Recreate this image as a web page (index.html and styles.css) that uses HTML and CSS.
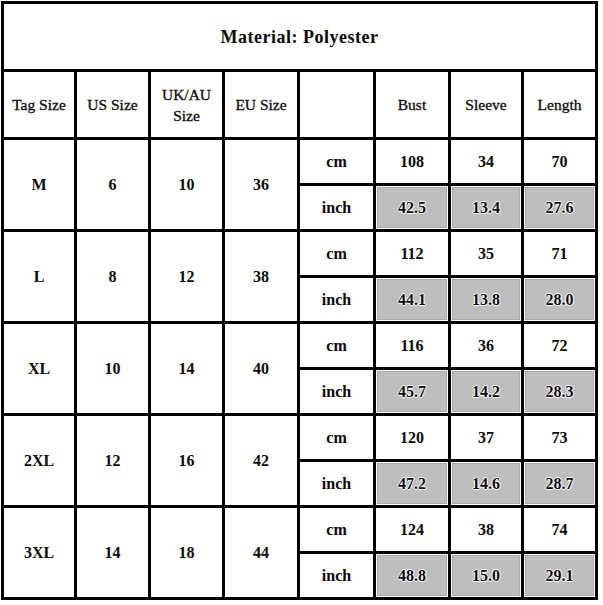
FILE: index.html
```html
<!DOCTYPE html>
<html lang="en">
<head>
<meta charset="utf-8">
<title>Size chart</title>
<link rel="stylesheet" href="styles.css">
</head>
<body>
<div class="page">
  <div class="sheet">
    <div class="cell title">Material: Polyester</div>

    <div class="cell head">Tag Size</div>
    <div class="cell head">US Size</div>
    <div class="cell head">UK/AU<br>Size</div>
    <div class="cell head">EU Size</div>
    <div class="cell head"></div>
    <div class="cell head">Bust</div>
    <div class="cell head">Sleeve</div>
    <div class="cell head">Length</div>

    <div class="cell span b">M</div>
    <div class="cell span b">6</div>
    <div class="cell span b">10</div>
    <div class="cell span b">36</div>
    <div class="cell b">cm</div>
    <div class="cell b">108</div>
    <div class="cell b">34</div>
    <div class="cell b">70</div>
    <div class="cell b">inch</div>
    <div class="cell g"><span class="fill">42.5</span></div>
    <div class="cell g"><span class="fill">13.4</span></div>
    <div class="cell g"><span class="fill">27.6</span></div>

    <div class="cell span b">L</div>
    <div class="cell span b">8</div>
    <div class="cell span b">12</div>
    <div class="cell span b">38</div>
    <div class="cell b">cm</div>
    <div class="cell b">112</div>
    <div class="cell b">35</div>
    <div class="cell b">71</div>
    <div class="cell b">inch</div>
    <div class="cell g"><span class="fill">44.1</span></div>
    <div class="cell g"><span class="fill">13.8</span></div>
    <div class="cell g"><span class="fill">28.0</span></div>

    <div class="cell span b">XL</div>
    <div class="cell span b">10</div>
    <div class="cell span b">14</div>
    <div class="cell span b">40</div>
    <div class="cell b">cm</div>
    <div class="cell b">116</div>
    <div class="cell b">36</div>
    <div class="cell b">72</div>
    <div class="cell b">inch</div>
    <div class="cell g"><span class="fill">45.7</span></div>
    <div class="cell g"><span class="fill">14.2</span></div>
    <div class="cell g"><span class="fill">28.3</span></div>

    <div class="cell span b">2XL</div>
    <div class="cell span b">12</div>
    <div class="cell span b">16</div>
    <div class="cell span b">42</div>
    <div class="cell b">cm</div>
    <div class="cell b">120</div>
    <div class="cell b">37</div>
    <div class="cell b">73</div>
    <div class="cell b">inch</div>
    <div class="cell g"><span class="fill">47.2</span></div>
    <div class="cell g"><span class="fill">14.6</span></div>
    <div class="cell g"><span class="fill">28.7</span></div>

    <div class="cell span b">3XL</div>
    <div class="cell span b">14</div>
    <div class="cell span b">18</div>
    <div class="cell span b">44</div>
    <div class="cell b">cm</div>
    <div class="cell b">124</div>
    <div class="cell b">38</div>
    <div class="cell b">74</div>
    <div class="cell b">inch</div>
    <div class="cell g"><span class="fill">48.8</span></div>
    <div class="cell g"><span class="fill">15.0</span></div>
    <div class="cell g"><span class="fill">29.1</span></div>
  </div>
</div>
</body>
</html>
```
FILE: styles.css
```css
html, body {
  margin: 0;
  padding: 0;
  background: #fff;
}

.page {
  padding: 1px 0 0 1px;
}

.sheet {
  display: grid;
  grid-template-columns: 70px 71px 71px 72px 73px 72px 70px 71px;
  grid-template-rows: 65px 65px repeat(10, 43px);
  gap: 3px;
  padding: 3px;
  background: #000;
  width: max-content;
  font-family: "Liberation Serif", "Times New Roman", serif;
  color: #0a0a0a;
}

.cell {
  background: #fff;
  display: flex;
  align-items: center;
  justify-content: center;
  text-align: center;
  font-size: 15px;
}

.title {
  grid-column: 1 / -1;
  font-size: 18px;
  font-weight: bold;
  letter-spacing: 0.5px;
  padding-top: 1px;
}

.head {
  font-size: 15.5px;
  line-height: 21px;
  -webkit-text-stroke: 0.3px #0a0a0a;
}

.span {
  grid-row: span 2;
}

.b {
  font-weight: bold;
  font-size: 16px;
}

.g {
  padding: 1px;
}

.fill {
  flex: 1;
  align-self: stretch;
  display: flex;
  align-items: center;
  justify-content: center;
  background: #bebebe;
  border: 1px dotted #9a9a9a;
  font-weight: bold;
  font-size: 16px;
  text-shadow: 1px 0 0 #fff, -1px 0 0 #fff, 0 1px 0 #fff, 0 -1px 0 #fff;
}
```
